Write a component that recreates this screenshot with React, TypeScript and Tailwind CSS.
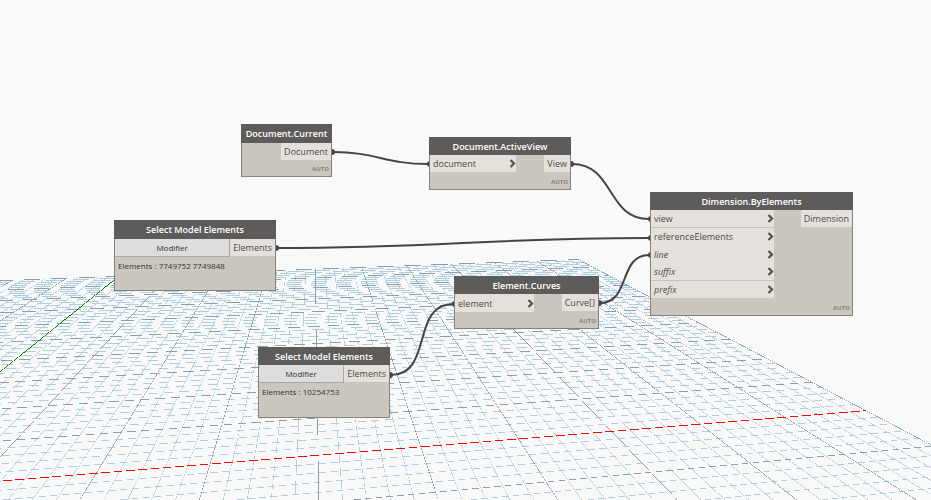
import type { ReactNode } from "react";
import { clsx } from "clsx";

type Point = [number, number];

// Ground grid: both families of lines run to a vanishing point
const VP_Y: Point = [313, 120];
const VP_X: Point = [4500, 115];
const CELLS = 5;
const EXTENT = 10;

const LIGHT = "#b1cede";
const DARK = "#8b9fae";

function baseOfY(i: number): Point {
  return [-158 + 119.2 * i, 499];
}

function baseOfX(j: number): Point {
  return [600, 119.7 + 1000 / (3.199 + 0.4 * j)];
}

function intersect(a: Point, b: Point, c: Point, d: Point): Point {
  const rx = b[0] - a[0];
  const ry = b[1] - a[1];
  const sx = d[0] - c[0];
  const sy = d[1] - c[1];
  const t = ((c[0] - a[0]) * sy - (c[1] - a[1]) * sx) / (rx * sy - ry * sx);
  return [a[0] + rx * t, a[1] + ry * t];
}

function crossing(i: number, j: number): Point {
  return intersect(VP_Y, baseOfY(i), VP_X, baseOfX(j));
}

// A line as a thin quad, so that it breaks up into dashes without antialiasing
function quad([x1, y1]: Point, [x2, y2]: Point, width = 0.6) {
  const len = Math.hypot(x2 - x1, y2 - y1);
  const nx = (-(y2 - y1) / len) * (width / 2);
  const ny = ((x2 - x1) / len) * (width / 2);
  const pts = [
    [x1 + nx, y1 + ny],
    [x2 + nx, y2 + ny],
    [x2 - nx, y2 - ny],
    [x1 - nx, y1 - ny],
  ];
  return "M" + pts.map((p) => `${p[0].toFixed(2)} ${p[1].toFixed(2)}`).join("L") + "Z";
}

function buildGrid() {
  const light: string[] = [];
  const dark: string[] = [];
  for (let n = -EXTENT * CELLS; n <= EXTENT * CELLS; n++) {
    if (n === 0) continue;
    const bucket = n % CELLS === 0 ? dark : light;
    bucket.push(quad(crossing(n / CELLS, EXTENT), crossing(n / CELLS, -5)));
    if (n >= -5 * CELLS) {
      bucket.push(quad(crossing(-EXTENT, n / CELLS), crossing(EXTENT, n / CELLS)));
    }
  }
  return { light: light.join(""), dark: dark.join("") };
}

const grid = buildGrid();
const xAxis = quad(crossing(-EXTENT, 0), crossing(EXTENT, 0), 0.7);
const yAxis = quad(crossing(0, EXTENT), crossing(0, -5), 0.7);

function GroundGrid() {
  return (
    <svg className="absolute inset-0 h-full w-full" shapeRendering="crispEdges" aria-hidden="true">
      <path d={grid.light} fill={LIGHT} />
      <path d={grid.dark} fill={DARK} />
      <path d={yAxis} fill="#008000" />
      <path d={xAxis} fill="#ff0000" />
    </svg>
  );
}

const wires: { from: Point; to: Point }[] = [
  { from: [333, 152], to: [428, 164] },
  { from: [572, 164], to: [649, 219] },
  { from: [277, 248], to: [649, 238] },
  { from: [391, 375], to: [453, 304] },
  { from: [600, 303], to: [649, 255] },
];

function Wires() {
  return (
    <svg className="absolute inset-0 h-full w-full" aria-hidden="true">
      {wires.map(({ from, to }) => {
        const bend = Math.hypot(to[0] - from[0], to[1] - from[1]) * 0.45;
        return (
          <g key={from.join()} fill="#444444">
            <path
              d={`M${from[0]} ${from[1]}C${from[0] + bend} ${from[1]} ${to[0] - bend} ${to[1]} ${to[0]} ${to[1]}`}
              fill="none"
              stroke="#444444"
              strokeWidth="2"
            />
            <circle cx={from[0] - 1} cy={from[1]} r="3" />
            <circle cx={to[0] + 2} cy={to[1]} r="3" />
          </g>
        );
      })}
    </svg>
  );
}

type NodeProps = { title: string; className: string; tall?: boolean; children: ReactNode };

function Node({ title, className, tall, children }: NodeProps) {
  return (
    <section className={clsx("absolute flex flex-col border border-[#85827d] bg-[#cbc6be]", className)}>
      <h2
        className={clsx(
          "-mx-px -mt-px shrink-0 bg-[#5e5c5a] text-center text-[9px] leading-[19px] font-semibold text-white",
          tall ? "h-[19px]" : "h-[18px]"
        )}
      >
        {title}
      </h2>
      {children}
    </section>
  );
}

function InPort({ name, optional, className }: { name: string; optional?: boolean; className?: string }) {
  return (
    <li className={clsx("flex items-center justify-between bg-[#e4e1dc] pl-[3px]", className ?? "h-[17px]")}>
      <span className={clsx(optional && "italic")}>{name}</span>
      <svg width="7" height="9" viewBox="0 0 7 9" aria-hidden="true">
        <path d="M1.5 1L5 4.5L1.5 8" fill="none" stroke="#55524f" strokeWidth="2.2" />
      </svg>
    </li>
  );
}

function OutPort({ name }: { name: string }) {
  return <div className="flex h-[17px] items-center bg-[#e4e1dc] px-[3px]">{name}</div>;
}

function Lacing() {
  return <div className="mt-auto pr-[2px] text-right text-[6px] leading-[14px] font-bold text-[#85817c]">AUTO</div>;
}

function SelectNode({ className, value, tall }: { className: string; value: string; tall?: boolean }) {
  return (
    <Node title="Select Model Elements" className={className} tall={tall}>
      <div className="flex items-start">
        <button
          type="button"
          className="h-[18px] flex-1 border-r border-b border-[#aaa8a4] bg-[#dddddd] text-center text-[8px] leading-[17px] text-[#333333]"
        >
          Modifier
        </button>
        <OutPort name="Elements" />
      </div>
      <p className="px-[3px] pt-[2px] text-[8px] leading-[14px] whitespace-nowrap text-[#333333]">Elements : {value}</p>
    </Node>
  );
}

export default function App() {
  return (
    <main className="relative min-h-screen w-full overflow-hidden bg-[#f9f9f9] font-['Open_Sans','Noto_Sans',sans-serif] text-[9px] leading-[17px] text-[#4d4a48]">
      <GroundGrid />
      <Wires />

      <Node title="Document.Current" className="top-[124px] left-[241px] h-[53px] w-[91px]" tall>
        <div className="flex justify-end">
          <OutPort name="Document" />
        </div>
        <Lacing />
      </Node>

      <Node title="Document.ActiveView" className="top-[137px] left-[429px] h-[53px] w-[142px]">
        <div className="flex justify-between">
          <ul className="w-[86px]">
            <InPort name="document" />
          </ul>
          <OutPort name="View" />
        </div>
        <Lacing />
      </Node>

      <Node title="Dimension.ByElements" className="top-[192px] left-[650px] h-[124px] w-[203px]">
        <div className="flex items-start justify-between">
          <ul className="w-[123px]">
            <InPort name="view" className="h-[18px] border-b border-[#c6c2bb]" />
            <InPort name="referenceElements" />
            <InPort name="line" optional className="h-[18px]" />
            <InPort name="suffix" optional className="h-[18px] border-b border-[#c6c2bb]" />
            <InPort name="prefix" optional />
          </ul>
          <OutPort name="Dimension" />
        </div>
        <Lacing />
      </Node>

      <SelectNode className="top-[220px] left-[114px] h-[71px] w-[162px]" value="7749752 7749848" tall />

      <Node title="Element.Curves" className="top-[276px] left-[454px] h-[53px] w-[145px]">
        <div className="flex justify-between">
          <ul className="w-[79px]">
            <InPort name="element" className="h-[18px]" />
          </ul>
          <OutPort name="Curve[]" />
        </div>
        <Lacing />
      </Node>

      <SelectNode className="top-[347px] left-[258px] h-[71px] w-[132px]" value="10254753" />
    </main>
  );
}
